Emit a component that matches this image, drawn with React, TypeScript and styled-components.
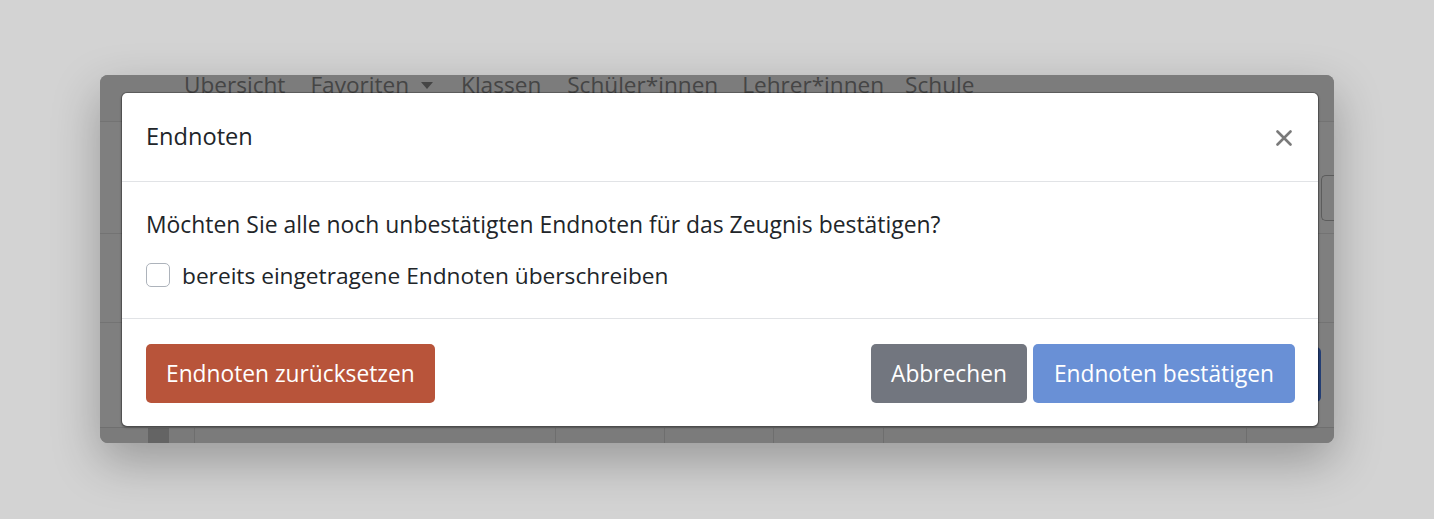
import React from "react";
import styled, { createGlobalStyle } from "styled-components";

const GlobalStyle = createGlobalStyle`
  html, body { margin: 0; padding: 0; }
  body {
    background: #d3d3d3;
    font-family: "Open Sans", "Noto Sans", sans-serif;
    color: #212529;
  }
  * { box-sizing: border-box; }
`;

const Page = styled.div`
  width: 1434px;
  height: 519px;
  padding: 75px 100px 0 100px;
`;

const AppWindow = styled.div`
  position: relative;
  width: 1234px;
  height: 368px;
  border-radius: 8px;
  overflow: hidden;
  background: #7f7f7f;
  box-shadow: 0 18px 48px rgba(0, 0, 0, 0.28);
  display: flex;
  flex-direction: column;
`;

const Navbar = styled.nav`
  height: 47px;
  flex: none;
  background: #7c7c7c;
  border-bottom: 1px solid #737373;
  padding-left: 84px;
  display: flex;
  align-items: flex-start;
`;

const NavItem = styled.span<{ $gap?: number }>`
  font-size: 22.6px;
  line-height: 19px;
  color: #454545;
  margin-right: ${(p) => p.$gap ?? 25}px;
  display: flex;
  align-items: center;
  white-space: nowrap;
`;

const Caret = styled.span`
  display: inline-block;
  width: 0;
  height: 0;
  margin-left: 12px;
  margin-top: 1px;
  border-left: 6.5px solid transparent;
  border-right: 6.5px solid transparent;
  border-top: 7px solid #454545;
`;

const Toolbar = styled.div`
  height: 111px;
  flex: none;
  display: flex;
  justify-content: flex-end;
  padding-top: 53px;
`;

const SearchInput = styled.div`
  width: 13px;
  height: 46px;
  border: 1px solid #5c5c5c;
  border-right: none;
  border-radius: 5px 0 0 5px;
`;

const Section = styled.div<{ $h: number }>`
  height: ${(p) => p.$h}px;
  flex: none;
  border-top: 1px solid #737373;
  display: flex;
  justify-content: flex-end;
  padding-top: 24px;
  padding-right: 13px;
`;

const DarkButton = styled.div`
  width: 60px;
  height: 55px;
  background: #243f77;
  border-radius: 0 5px 5px 0;
`;

const TableRow = styled.div`
  flex: 1;
  border-top: 1px solid #6f6f6f;
  display: grid;
  grid-template-columns: 48px 21px 25px 361px 109px 109px 110px 363px 1fr;
  background: #7b7b7b;
`;

const Cell = styled.div<{ $tone?: "dark" | "mid" }>`
  border-left: 1px solid ${(p) => (p.$tone ? "transparent" : "#6e6e6e")};
  background: ${(p) => (p.$tone === "dark" ? "#646464" : p.$tone === "mid" ? "#7a7a7a" : "transparent")};
  &:first-child { border-left: none; }
`;

const Modal = styled.div`
  position: absolute;
  left: 21px;
  top: 17px;
  width: 1198px;
  background: #fff;
  border: 1px solid rgba(0, 0, 0, 0.2);
  border-radius: 6px;
  display: flex;
  flex-direction: column;
  background-clip: padding-box;
  box-shadow: 0 1px 2px rgba(0, 0, 0, 0.25);
`;

const ModalHeader = styled.div`
  height: 89px;
  padding: 0 26px 0 24px;
  border-bottom: 1px solid #e1e3e6;
  display: flex;
  align-items: center;
  justify-content: space-between;
`;

const ModalTitle = styled.h5`
  margin: 0;
  font-size: 23.6px;
  font-weight: 400;
  line-height: 1.5;
  color: #212529;
`;

const CloseButton = styled.button`
  width: 16px;
  height: 16px;
  padding: 0;
  border: none;
  background: transparent;
  display: flex;
  margin-top: 2px;
  cursor: pointer;
`;

const ModalBody = styled.div`
  padding: 26px 24px 26px 24px;
  border-bottom: 1px solid #e1e3e6;
  display: flex;
  flex-direction: column;
  gap: 16px;
`;

const Question = styled.p`
  margin: 0;
  font-size: 22.9px;
  line-height: 34px;
  color: #212529;
`;

const CheckRow = styled.label`
  display: flex;
  align-items: center;
  gap: 12px;
  height: 34px;
  font-size: 22.7px;
  color: #212529;
`;

const CheckBox = styled.span`
  width: 24px;
  height: 24px;
  flex: none;
  border: 1px solid #adb3bb;
  border-radius: 5px;
  background: #fff;
`;

const ModalFooter = styled.div`
  padding: 25px 23px 23px 24px;
  display: flex;
  align-items: center;
  justify-content: space-between;
`;

const ButtonGroup = styled.div`
  display: flex;
  gap: 6px;
`;

const Button = styled.button<{ $variant: "danger" | "secondary" | "primary" }>`
  height: 59px;
  padding: 0 ${(p) => (p.$variant === "primary" ? 21 : 20)}px;
  border: none;
  border-radius: 5px;
  font-family: "Open Sans", "Noto Sans", sans-serif;
  font-size: 22.75px;
  font-weight: 400;
  color: #fff;
  white-space: nowrap;
  cursor: pointer;
  background: ${(p) =>
    p.$variant === "danger" ? "#b8543a" : p.$variant === "secondary" ? "#72767f" : "#6990d6"};
`;

const navItems: [string, number][] = [
  ["Klassen", 26],
  ["Schüler*innen", 24],
  ["Lehrer*innen", 21],
  ["Schule", 25],
];

export default function App() {
  return (
    <>
      <GlobalStyle />
      <Page>
        <AppWindow>
          <Navbar>
            <NavItem>Übersicht</NavItem>
            <NavItem $gap={28}>
              Favoriten
              <Caret />
            </NavItem>
            {navItems.map(([n, g]) => (
              <NavItem key={n} $gap={g}>
                {n}
              </NavItem>
            ))}
          </Navbar>
          <Toolbar>
            <SearchInput />
          </Toolbar>
          <Section $h={89} />
          <Section $h={105}>
            <DarkButton />
          </Section>
          <TableRow>
            <Cell />
            <Cell $tone="dark" />
            <Cell $tone="mid" />
            <Cell />
            <Cell />
            <Cell />
            <Cell />
            <Cell />
            <Cell />
          </TableRow>

          <Modal role="dialog" aria-modal="true">
            <ModalHeader>
              <ModalTitle>Endnoten</ModalTitle>
              <CloseButton aria-label="Schließen">
                <svg width="16" height="16" viewBox="0 0 16 16">
                  <path d="M1.5 1.5 L14.5 14.5 M14.5 1.5 L1.5 14.5" stroke="#7a7a7a" strokeWidth="2.6" strokeLinecap="round" />
                </svg>
              </CloseButton>
            </ModalHeader>
            <ModalBody>
              <Question>Möchten Sie alle noch unbestätigten Endnoten für das Zeugnis bestätigen?</Question>
              <CheckRow>
                <CheckBox />
                bereits eingetragene Endnoten überschreiben
              </CheckRow>
            </ModalBody>
            <ModalFooter>
              <Button $variant="danger">Endnoten zurücksetzen</Button>
              <ButtonGroup>
                <Button $variant="secondary">Abbrechen</Button>
                <Button $variant="primary">Endnoten bestätigen</Button>
              </ButtonGroup>
            </ModalFooter>
          </Modal>
        </AppWindow>
      </Page>
    </>
  );
}
